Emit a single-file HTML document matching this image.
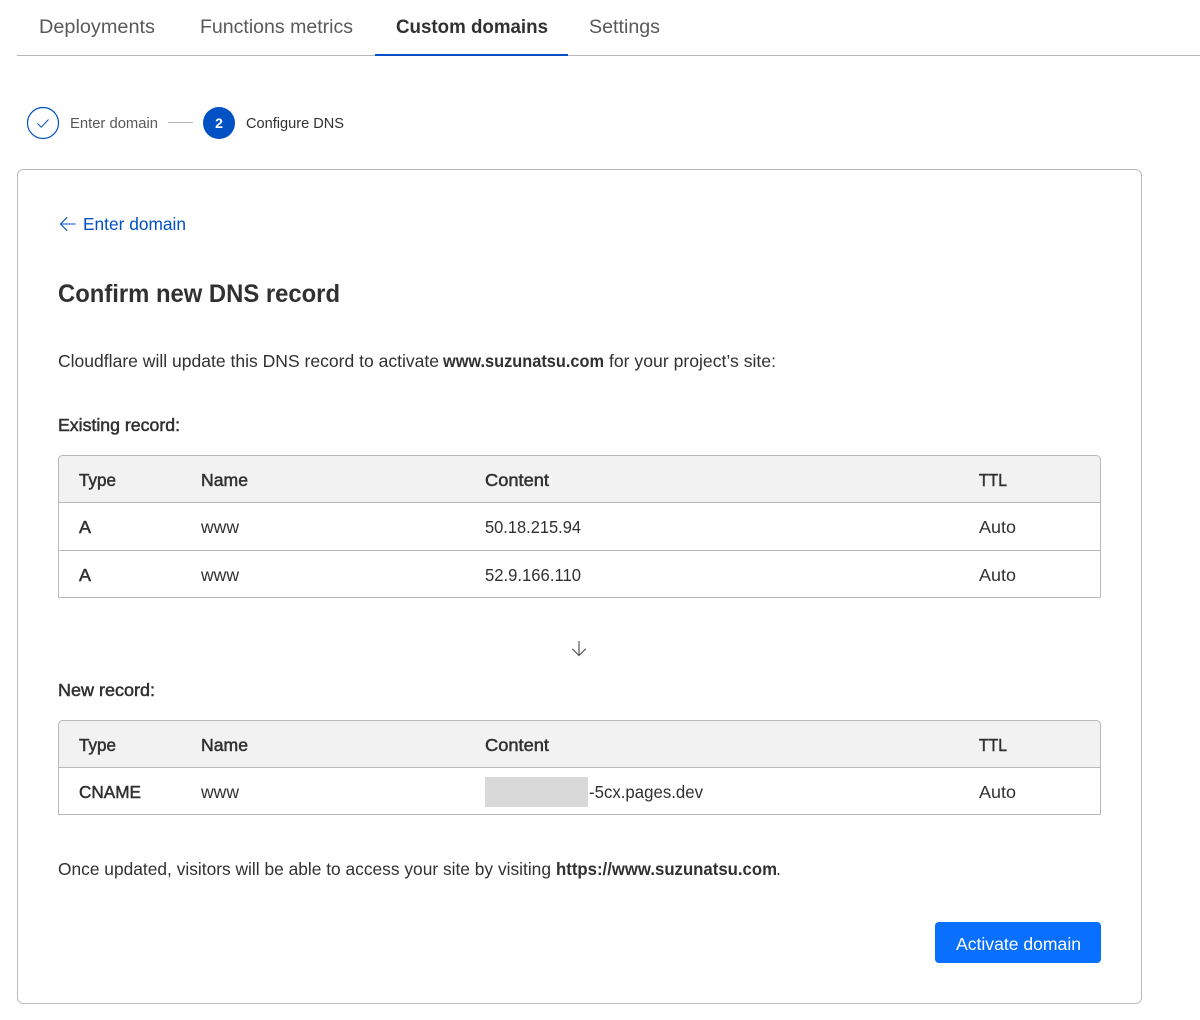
<!DOCTYPE html>
<html lang="en"><head><meta charset="utf-8"><title>Custom domains</title>
<style>
html,body{margin:0;padding:0;background:#fff;width:1200px;height:1020px;overflow:hidden}
svg{display:block}
text{font-family:"Liberation Sans",sans-serif;fill:#313131;white-space:pre}
.b{font-size:17.5px}
.m{font-size:17.5px;stroke:#313131;stroke-width:.5px}
.s{font-weight:bold}
</style></head><body>
<svg width="1200" height="1020" viewBox="0 0 1200 1020" xmlns="http://www.w3.org/2000/svg">
<!-- tabs -->
<rect x="17" y="55" width="1183" height="1" fill="#b9b9b9"/>
<rect x="375" y="54" width="193" height="2" fill="#0051c3"/>
<text x="39" y="33" font-size="19" textLength="116" lengthAdjust="spacingAndGlyphs" style="fill:#595959">Deployments</text>
<text x="200" y="33" font-size="19" textLength="153" lengthAdjust="spacingAndGlyphs" style="fill:#595959">Functions metrics</text>
<text x="396" y="33" font-size="19" class="s" textLength="152" lengthAdjust="spacingAndGlyphs">Custom domains</text>
<text x="589" y="33" font-size="19" textLength="71" lengthAdjust="spacingAndGlyphs" style="fill:#595959">Settings</text>
<!-- stepper -->
<circle cx="43" cy="123" r="15.5" fill="#fff" stroke="#0051c3" stroke-width="1.2"/>
<path d="M37.500 123.500l3.700 3.700 7.300-7.700" fill="none" stroke="#0051c3" stroke-width="1"/>
<text x="70" y="128" font-size="14.500" textLength="88" lengthAdjust="spacingAndGlyphs" style="fill:#595959">Enter domain</text>
<rect x="168" y="122" width="25" height="1" fill="#b9b9b9"/>
<circle cx="219" cy="123" r="16" fill="#0051c3"/>
<text x="219" y="128" font-size="14" class="s" text-anchor="middle" style="fill:#fff">2</text>
<text x="246" y="128" font-size="14.500" textLength="98" lengthAdjust="spacingAndGlyphs">Configure DNS</text>
<!-- card -->
<rect x="17.500" y="169.500" width="1124" height="834" rx="6" fill="#fff" stroke="#b9b9b9"/>
<!-- back link -->
<path d="M75.600 224H60.500M67.200 217.300L60.500 224l6.700 6.700" fill="none" stroke="#0051c3" stroke-width="1.100"/>
<text x="83" y="230" font-size="17.500" textLength="103" lengthAdjust="spacingAndGlyphs" style="fill:#0051c3">Enter domain</text>
<!-- heading -->
<text x="58" y="302" font-size="25" class="s" textLength="282" lengthAdjust="spacingAndGlyphs">Confirm new DNS record</text>
<!-- paragraph -->
<text x="58" y="367" class="b" textLength="381" lengthAdjust="spacingAndGlyphs">Cloudflare will update this DNS record to activate</text>
<text x="443" y="367" class="b s" textLength="161" lengthAdjust="spacingAndGlyphs">www.suzunatsu.com</text>
<text x="609" y="367" class="b" textLength="167" lengthAdjust="spacingAndGlyphs">for your project’s site:</text>
<text x="58" y="431" class="m" textLength="122" lengthAdjust="spacingAndGlyphs">Existing record:</text>
<!-- table 1 -->
<path d="M58.500 502.500V459.500a4 4 0 0 1 4-4H1096.500a4 4 0 0 1 4 4V502.500Z" fill="#f2f2f2"/>
<path d="M62.500 455.500H1096.500a4 4 0 0 1 4 4V597.500H58.500V459.500a4 4 0 0 1 4-4ZM58.500 502.500H1100.500M58.500 550.500H1100.500" fill="none" stroke="#b9b9b9"/>
<text x="79" y="486" class="m" textLength="37" lengthAdjust="spacingAndGlyphs">Type</text>
<text x="201" y="486" class="m" textLength="47" lengthAdjust="spacingAndGlyphs">Name</text>
<text x="485" y="486" class="m" textLength="64" lengthAdjust="spacingAndGlyphs">Content</text>
<text x="979" y="486" class="m" textLength="28" lengthAdjust="spacingAndGlyphs">TTL</text>
<text x="79" y="533" class="m" textLength="12" lengthAdjust="spacingAndGlyphs">A</text>
<text x="201" y="533" class="b" textLength="38" lengthAdjust="spacingAndGlyphs">www</text>
<text x="485" y="533" class="b" textLength="96" lengthAdjust="spacingAndGlyphs">50.18.215.94</text>
<text x="979" y="533" class="b" textLength="37" lengthAdjust="spacingAndGlyphs">Auto</text>
<text x="79" y="581" class="m" textLength="12" lengthAdjust="spacingAndGlyphs">A</text>
<text x="201" y="581" class="b" textLength="38" lengthAdjust="spacingAndGlyphs">www</text>
<text x="485" y="581" class="b" textLength="96" lengthAdjust="spacingAndGlyphs">52.9.166.110</text>
<text x="979" y="581" class="b" textLength="37" lengthAdjust="spacingAndGlyphs">Auto</text>
<!-- arrow -->
<path d="M579 641V655.500M572.300 648.800l6.700 6.700 6.700-6.700" fill="none" stroke="#595959" stroke-width="1.200"/>
<text x="58" y="696" class="m" textLength="97" lengthAdjust="spacingAndGlyphs">New record:</text>
<!-- table 2 -->
<path d="M58.500 767.500V724.500a4 4 0 0 1 4-4H1096.500a4 4 0 0 1 4 4V767.500Z" fill="#f2f2f2"/>
<path d="M62.500 720.500H1096.500a4 4 0 0 1 4 4V814.500H58.500V724.500a4 4 0 0 1 4-4ZM58.500 767.500H1100.500" fill="none" stroke="#b9b9b9"/>
<text x="79" y="751" class="m" textLength="37" lengthAdjust="spacingAndGlyphs">Type</text>
<text x="201" y="751" class="m" textLength="47" lengthAdjust="spacingAndGlyphs">Name</text>
<text x="485" y="751" class="m" textLength="64" lengthAdjust="spacingAndGlyphs">Content</text>
<text x="979" y="751" class="m" textLength="28" lengthAdjust="spacingAndGlyphs">TTL</text>
<text x="79" y="798" class="m" textLength="62" lengthAdjust="spacingAndGlyphs">CNAME</text>
<text x="201" y="798" class="b" textLength="38" lengthAdjust="spacingAndGlyphs">www</text>
<rect x="485" y="777" width="103" height="30" fill="#d9d9d9"/>
<text x="589" y="798" class="b" textLength="114" lengthAdjust="spacingAndGlyphs">-5cx.pages.dev</text>
<text x="979" y="798" class="b" textLength="37" lengthAdjust="spacingAndGlyphs">Auto</text>
<!-- footer paragraph -->
<text x="58" y="875" class="b" textLength="493" lengthAdjust="spacingAndGlyphs">Once updated, visitors will be able to access your site by visiting</text>
<text x="556" y="875" class="b s" textLength="221" lengthAdjust="spacingAndGlyphs">https://www.suzunatsu.com</text>
<text x="776" y="875" class="b">.</text>
<!-- button -->
<rect x="935" y="922" width="166" height="41" rx="4" fill="#086fff"/>
<text x="956" y="950" font-size="17.500" textLength="125" lengthAdjust="spacingAndGlyphs" style="fill:#fff">Activate domain</text>
</svg>
</body></html>
